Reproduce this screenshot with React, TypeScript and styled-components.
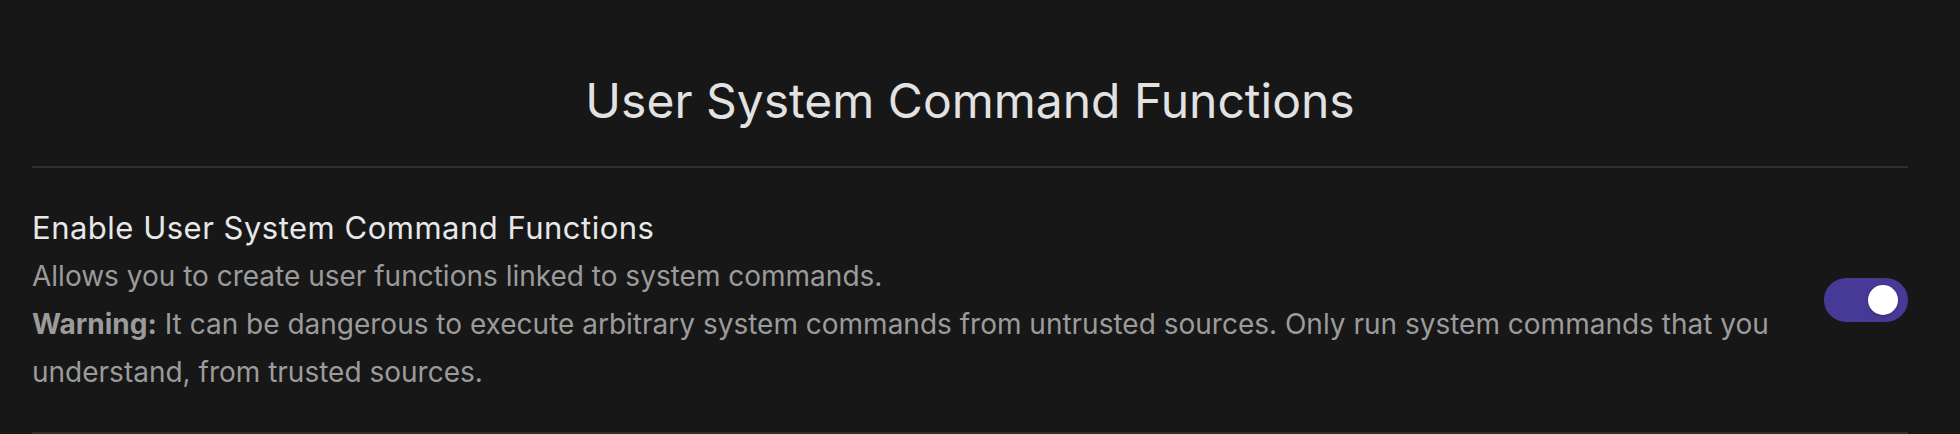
import React, { useState } from "react";
import styled, { createGlobalStyle } from "styled-components";

const GlobalStyle = createGlobalStyle`
  html, body {
    margin: 0;
    padding: 0;
    background: #171717;
  }
  body {
    font-family: Inter, "Noto Sans", sans-serif;
    -webkit-font-smoothing: antialiased;
  }
`;

const Page = styled.main`
  box-sizing: border-box;
  width: 1960px;
  height: 434px;
  padding: 65px 52px 0 32px;
  background: #171717;
  overflow: hidden;
`;

const Title = styled.h1`
  margin: 0 0 29px;
  font-size: 48px;
  line-height: 72px;
  font-weight: 400;
  color: #e2e2e2;
  text-align: center;
  letter-spacing: 0;
`;

const Divider = styled.hr`
  margin: 0;
  border: none;
  height: 2px;
  background: #2e2e2e;
`;

const SettingRow = styled.section`
  display: flex;
  align-items: center;
  justify-content: space-between;
  gap: 40px;
  padding: 36px 0;
`;

const SettingText = styled.div`
  flex: 1;
  min-width: 0;
`;

const Label = styled.h2`
  margin: 0;
  font-size: 31px;
  line-height: 48px;
  font-weight: 400;
  letter-spacing: 0.5px;
  color: #e8e8e8;
`;

const Description = styled.p`
  margin: 0;
  font-size: 28px;
  line-height: 48px;
  font-weight: 400;
  color: #9b9b9b;
`;

const Strong = styled.strong`
  font-weight: 700;
  color: #9b9b9b;
`;

const Track = styled.button<{ $on: boolean }>`
  flex: none;
  position: relative;
  width: 84px;
  height: 44px;
  padding: 0;
  border: none;
  border-radius: 22px;
  background: ${(p) => (p.$on ? "#473a96" : "#3a3a3a")};
  cursor: pointer;
`;

const Knob = styled.span<{ $on: boolean }>`
  position: absolute;
  top: 7px;
  left: ${(p) => (p.$on ? "44px" : "10px")};
  width: 30px;
  height: 30px;
  border-radius: 50%;
  background: #ffffff;
  box-shadow: 0 1px 3px rgba(0, 0, 0, 0.3);
  transition: left 0.15s ease;
`;

export default function App() {
  const [on, setOn] = useState(true);
  return (
    <>
      <GlobalStyle />
      <Page>
        <Title>User System Command Functions</Title>
        <Divider />
        <SettingRow>
          <SettingText>
            <Label>Enable User System Command Functions</Label>
            <Description>
              Allows you to create user functions linked to system commands.
            </Description>
            <Description>
              <Strong>Warning:</Strong> It can be dangerous to execute arbitrary
              system commands from untrusted sources. Only run system commands
              that you understand, from trusted sources.
            </Description>
          </SettingText>
          <Track
            type="button"
            role="switch"
            aria-checked={on}
            $on={on}
            onClick={() => setOn(!on)}
          >
            <Knob $on={on} />
          </Track>
        </SettingRow>
        <Divider />
      </Page>
    </>
  );
}
